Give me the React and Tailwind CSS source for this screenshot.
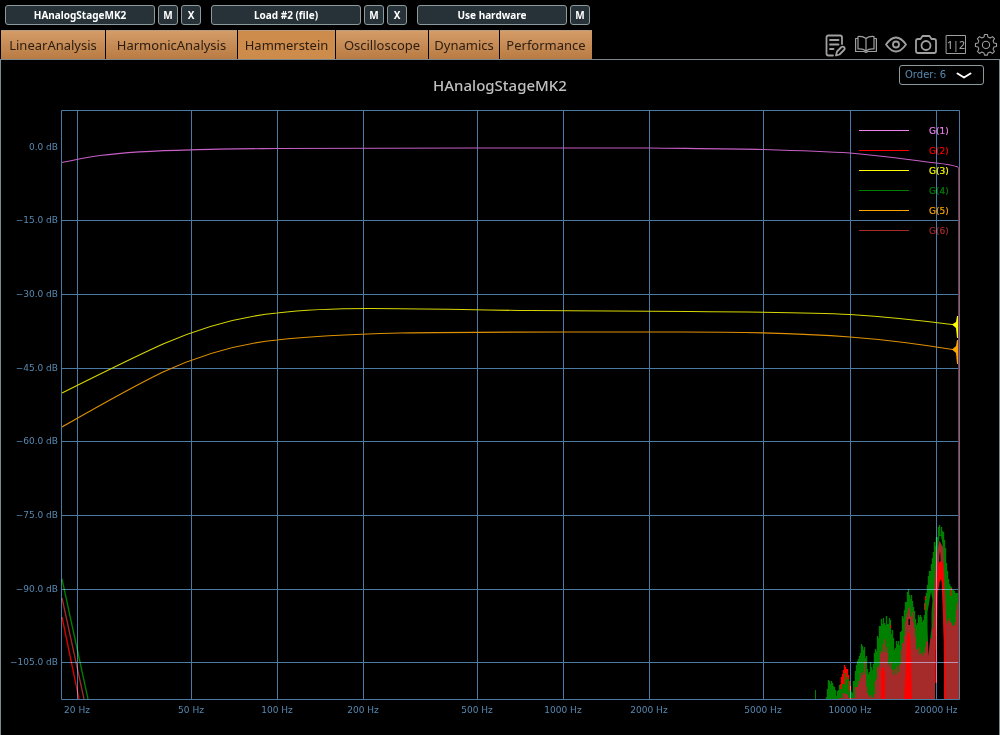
import { useState } from 'react';

const devices = [
  { name: 'HAnalogStageMK2', actions: ['M', 'X'] },
  { name: 'Load #2 (file)', actions: ['M', 'X'] },
  { name: 'Use hardware', actions: ['M'] },
];

const tabs = [
  { name: 'LinearAnalysis', width: 'w-[104px]' },
  { name: 'HarmonicAnalysis', width: 'w-[131px]' },
  { name: 'Hammerstein', width: 'w-[97px]' },
  { name: 'Oscilloscope', width: 'w-[92px]' },
  { name: 'Dynamics', width: 'w-[70px]' },
  { name: 'Performance', width: 'w-[92px]' },
];

const freqs = [
  [77, '20 Hz'], [191, '50 Hz'], [277, '100 Hz'], [363, '200 Hz'], [477, '500 Hz'],
  [563, '1000 Hz'], [649, '2000 Hz'], [763, '5000 Hz'], [850, '10000 Hz'], [936, '20000 Hz'],
];

const levels = [
  [147, '0.0 dB'], [220, '−15.0 dB'], [294, '−30.0 dB'], [368, '−45.0 dB'],
  [441, '−60.0 dB'], [515, '−75.0 dB'], [589, '−90.0 dB'], [662, '−105.0 dB'],
];

const legend = [
  ['G(1)', '#ee82ee'], ['G(2)', '#ff0000'], ['G(3)', '#ffff00'],
  ['G(4)', '#008000'], ['G(5)', '#ffa500'], ['G(6)', '#a52a2a'],
];

// Upper outlines of the noise bands: [x, y] pairs, interpolated and roughened per column.
const red = [[840, 682], [842, 672], [844, 664], [846, 665], [848, 672], [850, 686]];
const green = [[826, 688], [828, 679], [830, 675], [833, 684], [836, 688], [839, 684], [841, 684], [843, 677], [846, 668], [850, 688], [852, 688], [854, 670], [858, 648], [861, 641], [864, 642], [868, 664], [872, 660], [876, 640], [880, 620], [884, 614], [889, 614], [894, 640], [899, 636], [903, 608], [906, 590], [909, 585], [912, 592], [915, 614], [919, 612], [923, 612], [928, 568], [932, 552], [936, 532], [938, 525], [943, 525], [945, 548], [947, 568], [951, 580], [955, 582], [958, 584]];
const brown = [[839, 699], [842, 692], [846, 690], [850, 699], [856, 682], [860, 670], [864, 661], [868, 692], [873, 696], [877, 664], [881, 644], [884, 638], [888, 654], [892, 666], [898, 664], [902, 641], [906, 608], [909, 602], [912, 610], [916, 640], [922, 648], [926, 636], [930, 634], [934, 618]];
const brownEdge = [[944, 612], [947, 610], [949, 608], [952, 612], [955, 610], [958, 594]];

const jitter = (i) => {
  const v = Math.sin(i * 91.7) * 43758.5;
  return v - Math.floor(v);
};

function noise(points, seed, amount) {
  let d = '';
  for (let x = points[0][0]; x <= points[points.length - 1][0]; x++) {
    const k = Math.max(1, points.findIndex((p) => p[0] >= x));
    const [a, b] = [points[k - 1], points[k]];
    const y = a[1] + ((b[1] - a[1]) * (x - a[0])) / (b[0] - a[0]);
    d += `M${x + 0.5} 699V${Math.round(Math.min(698, y + jitter(x + seed) * amount))}`;
  }
  return d;
}

function Chart() {
  return (
    <svg viewBox="1 110 998 625" className="block w-full" role="img" aria-label="Level in dB against frequency for each kernel">
      <g fill="none">
        <path d={noise(red, 1, 4)} stroke="#ff0000" strokeWidth="1.300" />
        <path d={noise(green, 3, 12)} stroke="#008000" strokeWidth="1.400" />
        <path d="M815.500 699V690" stroke="#008000" />
        <path d="M849.500 688V681M890.500 628V625M924.500 610V603M925.500 600V596M951.500 596V588" stroke="#ff0000" />
        <path d={noise(brown, 9, 12)} stroke="#a52a2a" strokeWidth="1.200" />
        <path d="M881 699V672L882 668L884 667L885 674V699ZM904 699L906 665L907 640L908 632L910 634L911 662L912 699Z" fill="#ff0000" />
        <path d="M927.500 628V612L931 592L932.500 600L931.500 612V628L929.500 645L928.500 656ZM908.500 619H910V625H908.500Z" fill="#000" />
        <path d="M938.500 544L939.500 536H941L942.500 544V551L940.500 543L938.500 553Z" fill="#000" />
        <path d="M935 699V640L936 590L939 545L942 543L943.500 570L945 622V699Z" fill="#000" />
        <path d={noise(brownEdge, 5, 16)} stroke="#a52a2a" strokeWidth="1.200" />
        <path d="M934 650L935.500 590L938 554L940 545L941.500 548L943 580L945.500 640V699" stroke="#a52a2a" strokeWidth="3" />
        <path d="M936 683V640L937 588L939 563L941.500 563L943.500 590L944.500 640L945 699" stroke="#ff0000" strokeWidth="1.500" />
        <path d="M937 590L938 568L940 561L943 563L944 590L942.500 584L941 579L939.500 582L938 592Z" fill="#ff0000" />
        <path d="M62 617L79 699" stroke="#e00000" strokeWidth="1.300" />
        <path d="M62 598L84 699" stroke="#a52a2a" strokeWidth="1.300" />
        <path d="M62 579L88 699" stroke="#008000" strokeWidth="1.300" />
      </g>
      <g fontSize="9" fontFamily="DejaVu Sans, sans-serif">
        {legend.map(([name, color], i) => (
          <g key={name}>
            <path d={`M859 ${130.5 + i * 20}H909`} stroke={color} strokeWidth="1.200" />
            <text x="929" y={134 + i * 20} fill={color} stroke={color} strokeWidth="0.200">{name}</text>
          </g>
        ))}
      </g>
      <g fill="none" stroke="#4b7ba5" className="mix-blend-screen">
        <path d="M61.500 110.500H959.500V699.500H61.500Z" />
        {freqs.map(([x]) => <path key={x} d={`M${x + 0.5} 110V699`} />)}
        {levels.slice(1).map(([y]) => <path key={y} d={`M61 ${y + 0.5}H959`} />)}
      </g>
      <g fill="none" strokeWidth="1.200">
        <path d="M62 162.500C75 160 87 157 100 155.500C130 151.500 160 150.500 191 149.800C220 149 250 148.800 277 148.500L477 148H649C690 148.500 730 148.700 763 149.500C795 150.500 825 151.500 850 153C885 156 910 160 936 163C945 164 952 165 958 167" stroke="#c55fc5" />
        <path d="M62 393C100 374 132 358 163 344C200 328 235 317 277 313C310 309 345 308.500 370 308.500C430 308.500 470 310 530 310.500L690 311.500C760 312 810 312.500 850 314.500C890 317 925 321 956 325" stroke="#d7d700" />
        <path d="M62 427C97 407 130 388 163 372C200 355 235 344 277 340C315 335.500 360 334 400 333C460 332 500 332 570 332L680 332C750 332 805 333.500 850 337C890 340 925 345 956 350" stroke="#df9000" />
        <path d="M952 324.500L956 322L957 316H958V338H957L956 328Z" fill="#ffff00" />
        <path d="M952 349.500L956 346L957 340H958V364H957L956 353Z" fill="#ffa500" />
        <path d="M958.500 167V699" stroke="#a52a2a" strokeWidth="1" />
      </g>
      <g fontSize="9" fontFamily="DejaVu Sans, sans-serif" fill="#5788b0">
        {levels.map(([y, label]) => <text key={label} x="58" y={y + 3} textAnchor="end">{label}</text>)}
        {freqs.map(([x, label]) => <text key={label} x={x} y="713" textAnchor="middle">{label}</text>)}
      </g>
    </svg>
  );
}

const icons = [
  ['Notes', <path key="n" strokeWidth="1.800" d="M8 21.500H3.500Q1.500 21.500 1.500 19.500V3.500Q1.500 1.500 3.500 1.500H15Q17 1.500 17 3.500V10M5 6H13.500M5 10.500H13.500M5 15H8.500M11 21.500L12 17.500L16.500 13Q18 12 19.300 13.300Q20.300 14.800 19 16L14.500 20.500Z" />],
  ['Manual', <path key="b" strokeWidth="1.200" d="M11 4.500Q8 2 3 2.500V15Q8 14.500 11 17Q14 14.500 19 15V2.500Q14 2 11 4.500V17M3 4.500H.6V17.500H9L11 18.500L13 17.500H21.400V4.500H19" />],
  ['View', <g key="v" strokeWidth="1.800"><path d="M1 10.500Q11-3.500 21 10.500Q11 24.500 1 10.500Z" /><circle cx="11" cy="10.500" r="3" /></g>],
  ['Screenshot', <g key="s" strokeWidth="1.800"><path d="M3 5H5.500L7.500 2H14.500L16.500 5H19Q21 5 21 7V17Q21 19 19 19H3Q1 19 1 17V7Q1 5 3 5Z" /><circle cx="11" cy="11.500" r="4.500" /></g>],
  ['Compare 1 and 2', (
    <g key="c">
      <rect x="1.500" y="1.500" width="19" height="18" strokeWidth="1" />
      <text x="11" y="14.500" textAnchor="middle" fontSize="10.500" fontFamily="Noto Sans, sans-serif" fontWeight="500" fill="#a0a0a0" stroke="none">1|2</text>
    </g>
  )],
  ['Settings', (
    <g key="g" strokeWidth="1.100">
      <path d="M9.500.5H12.500L13.100 3.200L15.400 4.200L17.800 2.700L19.900 4.800L18.400 7.200L19.300 9.400L22 10V13L19.300 13.600L18.400 15.800L19.900 18.200L17.800 20.300L15.400 18.800L13.100 19.700L12.500 22H9.500L8.900 19.700L6.700 18.800L4.300 20.300L2.100 18.200L3.600 15.800L2.700 13.600L0 13V10L2.700 9.400L3.600 7.200L2.100 4.800L4.300 2.700L6.700 4.200L8.900 3.200Z" transform="translate(.4 0) scale(.96)" />
      <circle cx="11" cy="10.900" r="3.600" />
    </g>
  )],
];

const deviceButton = 'h-5 rounded-[3px] border border-[#8b9a9c] bg-[#263237] text-[10px] font-bold leading-[18px] text-white';

export default function App() {
  const [active, setActive] = useState('Hammerstein');
  return (
    <div className="flex min-h-screen flex-col bg-black font-['Noto_Sans',sans-serif]">
      <header>
        <div className="flex h-[30px] gap-2.5 pl-[5px] pt-[5px]">
          {devices.map((d) => (
            <div key={d.name} className="flex gap-[3px]">
              <button className={`${deviceButton} w-[150px]`}>{d.name}</button>
              {d.actions.map((a) => (
                <button key={a} aria-label={`${a} ${d.name}`} className={`${deviceButton} w-5`}>{a}</button>
              ))}
            </div>
          ))}
        </div>
        <div className="flex h-[29px] items-stretch justify-between">
          <nav className="flex gap-px pl-px">
            {tabs.map((t) => (
              <button
                key={t.name}
                onClick={() => setActive(t.name)}
                className={`${t.width} border-t border-[#b99b7d] pt-0.5 text-[13px] text-[#2b1d10] ${t.name === active ? 'bg-[#cd8b4c]' : 'bg-linear-to-b from-[#d49c68] to-[#b97b43]'}`}
              >
                {t.name}
              </button>
            ))}
          </nav>
          <div className="flex items-center gap-2 pr-[3px]">
            {icons.map(([name, art]) => (
              <button key={name} aria-label={name}>
                <svg viewBox="0 0 22 22" className="size-[22px] overflow-visible" fill="none" stroke="#a0a0a0" strokeLinejoin="round" strokeLinecap="round">{art}</svg>
              </button>
            ))}
          </div>
        </div>
      </header>
      <main className="grow border-x border-t border-[#7c898c]">
        <div className="grid h-[50px] grid-cols-[1fr_auto_1fr] items-start">
          <h1 className="col-start-2 pt-[13px] text-[15px] font-medium leading-6 text-[#c0c0c0]">HAnalogStageMK2</h1>
          <div className="relative mr-[15px] mt-[5px] justify-self-end">
            <select aria-label="Order" defaultValue="6" className="block h-5 w-[85px] appearance-none rounded-[3px] border border-[#8b9a9c] bg-black pl-[5px] font-['DejaVu_Sans',sans-serif] text-[10px] leading-[18px] text-[#5788b0]">
              {['1', '2', '3', '4', '5', '6'].map((n) => <option key={n} value={n}>Order: {n}</option>)}
            </select>
            <svg viewBox="0 0 16 8" className="pointer-events-none absolute right-3 top-[7px] h-2 w-4" fill="none" stroke="#fff" strokeWidth="2" strokeLinecap="round" strokeLinejoin="round">
              <path d="M1.500 1.500L8 5.500L14.500 1.500" />
            </svg>
          </div>
        </div>
        <Chart />
      </main>
    </div>
  );
}
